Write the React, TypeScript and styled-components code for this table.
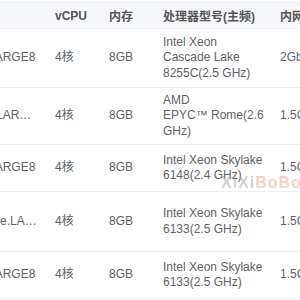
import React from "react";
import styled, { createGlobalStyle } from "styled-components";

const GlobalStyle = createGlobalStyle`
  html, body {
    margin: 0;
    padding: 0;
    background: #fff;
  }
  body {
    font-family: "Liberation Sans", "Noto Sans CJK SC", sans-serif;
  }
`;

// 画面 (스크롤된 상태의 표를 잘라서 보여줌)
const Viewport = styled.div`
  position: relative;
  width: 300px;
  height: 300px;
  overflow: hidden;
  padding-top: 2px;
  box-sizing: border-box;
`;

const Table = styled.table`
  margin-left: -43px;
  width: 413px;
  border-collapse: collapse;
  table-layout: fixed;
  font-size: 12px;
`;

const HeadRow = styled.tr`
  height: 26px;
  background: #f5f7fa;
  border-top: 1px solid #ebeef5;
  border-bottom: 1px solid #ebeef5;
`;

const HeadCell = styled.th<{ $w: number }>`
  box-sizing: border-box;
  width: ${(p) => p.$w}px;
  padding: 0 10px;
  text-align: left;
  font-weight: 600;
  color: #555;
  white-space: nowrap;
  overflow: hidden;
`;

const Row = styled.tr<{ $h: number }>`
  height: ${(p) => p.$h}px;
  border-bottom: 1px solid #ebeef5;
`;

const Cell = styled.td`
  box-sizing: border-box;
  padding: 0 10px;
  color: #606266;
  line-height: 15.5px;
  vertical-align: middle;
  white-space: nowrap;
  overflow: hidden;
`;

// 첫 번째 열: 넘치면 말줄임
const NameCell = styled(Cell)`
  padding: 0 7px 0 13px;
  text-overflow: ellipsis;
`;

const Line = styled.div`
  white-space: nowrap;
`;

// 워터마크
const Watermark = styled.div`
  position: absolute;
  left: 221px;
  top: 174px;
  font-size: 16px;
  font-weight: 700;
  letter-spacing: 1px;
  pointer-events: none;
  white-space: nowrap;
`;

const Mark = styled.span<{ $c: string }>`
  color: ${(p) => p.$c};
`;

interface SpecType {
  type: string;
  cpu: string;
  mem: string;
  cpuModel: string[];
  net: string;
  height: number;
}

const columns = [
  { title: "规格", w: 88 },
  { title: "vCPU", w: 54 },
  { title: "内存", w: 54 },
  { title: "处理器型号(主频)", w: 117 },
  { title: "内网带宽", w: 100 },
];

const specs: SpecType[] = [
  {
    type: "S5.LARGE8",
    cpu: "4核",
    mem: "8GB",
    cpuModel: ["Intel Xeon", "Cascade Lake", "8255C(2.5 GHz)"],
    net: "2Gbps",
    height: 59,
  },
  {
    type: "SA2.LARGE8",
    cpu: "4核",
    mem: "8GB",
    cpuModel: ["AMD", "EPYC™ Rome(2.6", "GHz)"],
    net: "1.5Gbps",
    height: 57,
  },
  {
    type: "S4.LARGE8",
    cpu: "4核",
    mem: "8GB",
    cpuModel: ["Intel Xeon Skylake", "6148(2.4 GHz)"],
    net: "1.5Gbps",
    height: 47,
  },
  {
    type: "SN3ne.LARGE8",
    cpu: "4核",
    mem: "8GB",
    cpuModel: ["Intel Xeon Skylake", "6133(2.5 GHz)"],
    net: "1.5Gbps",
    height: 60,
  },
  {
    type: "S3.LARGE8",
    cpu: "4核",
    mem: "8GB",
    cpuModel: ["Intel Xeon Skylake", "6133(2.5 GHz)"],
    net: "1.5Gbps",
    height: 47,
  },
];

function App() {
  return (
    <Viewport>
      <GlobalStyle />
      <Table>
        <thead>
          <HeadRow>
            {columns.map((c) => (
              <HeadCell key={c.title} $w={c.w}>
                {c.title}
              </HeadCell>
            ))}
          </HeadRow>
        </thead>
        <tbody>
          {specs.map((s) => (
            <Row key={s.type} $h={s.height}>
              <NameCell>{s.type}</NameCell>
              <Cell>{s.cpu}</Cell>
              <Cell>{s.mem}</Cell>
              <Cell>
                {s.cpuModel.map((l) => (
                  <Line key={l}>{l}</Line>
                ))}
              </Cell>
              <Cell>{s.net}</Cell>
            </Row>
          ))}
        </tbody>
      </Table>
      <Watermark>
        <Mark $c="rgba(170,170,170,0.55)">XiXi</Mark>
        <Mark $c="rgba(240,150,120,0.45)">BoBo.</Mark>
      </Watermark>
    </Viewport>
  );
}

export default App;
